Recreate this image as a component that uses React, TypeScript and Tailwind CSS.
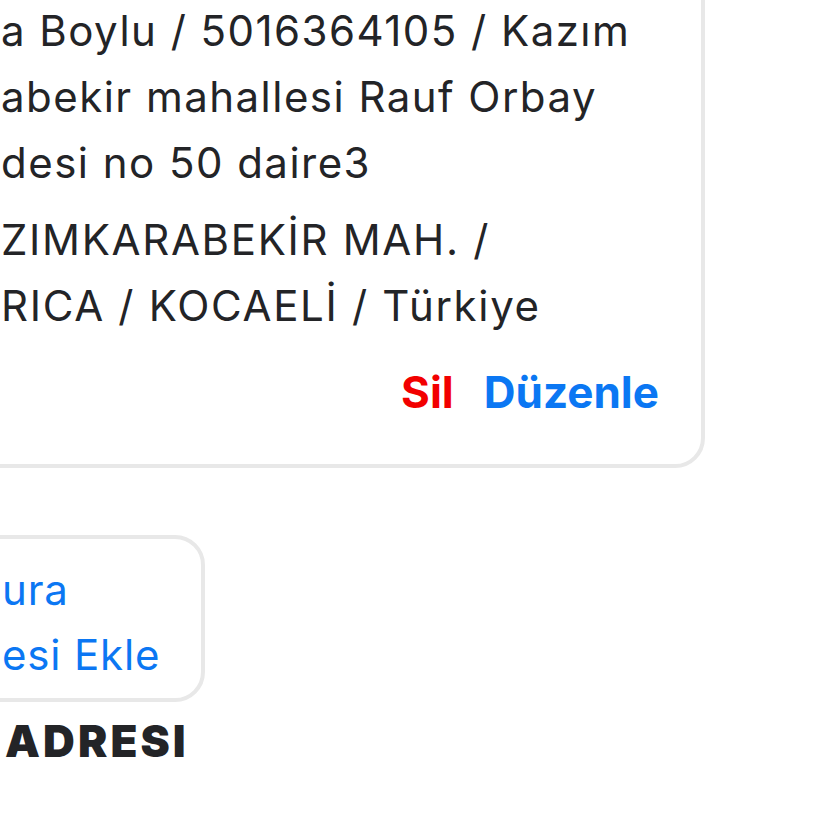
import React from 'react';

// Visible slice of the saved-address list: the page is scrolled so the left side is cut.
const lines1 = ['a Boylu / 5016364105 / Kazım', 'abekir mahallesi Rauf Orbay', 'desi no 50 daire3'];
const lines2 = ['ZIMKARABEKİR MAH. /', 'RICA / KOCAELİ / Türkiye'];

const AddressCard: React.FC = () => (
  <div className="w-[765px] rounded-[30px] border-4 border-[#e8e8e8] bg-white pt-[40px] pb-[42px] pl-[57px] pr-[42px]">
    <div className="text-[42px] leading-[66px] tracking-[0.035em] text-[#232427]">
      {lines1.map((l) => (
        <div key={l} className="whitespace-nowrap">{l}</div>
      ))}
    </div>
    <div className="mt-[11px] text-[42px] leading-[66px] tracking-[0.04em] text-[#232427]">
      {lines2.map((l) => (
        <div key={l} className="whitespace-nowrap">{l}</div>
      ))}
    </div>
    <div className="mt-[23px] flex justify-end gap-[30px] text-[44px] font-bold leading-[60px]">
      <button className="text-[#f20000]">Sil</button>
      <button className="text-[#0b77f3]">Düzenle</button>
    </div>
  </div>
);

export default function App() {
  return (
    <div className="h-[825px] w-[825px] overflow-hidden bg-white" style={{ fontFamily: 'Inter, "Noto Sans", sans-serif' }}>
      <div className="-ml-[60px] -mt-[46px] flex flex-col items-start">
        <AddressCard />
        <button className="mt-[67px] w-[265px] rounded-[30px] border-4 border-[#e8e8e8] bg-white pt-[18px] pb-[11px] pl-[58px] text-left text-[42px] leading-[65px] tracking-[0.02em] text-[#0b77f3]">
          <div>ura</div>
          <div>esi Ekle</div>
        </button>
        <h2 className="mt-[11px] whitespace-nowrap pl-[65px] text-[44px] font-black leading-[56px] tracking-[0.07em] text-[#232427]">
          ADRESI
        </h2>
      </div>
    </div>
  );
}
